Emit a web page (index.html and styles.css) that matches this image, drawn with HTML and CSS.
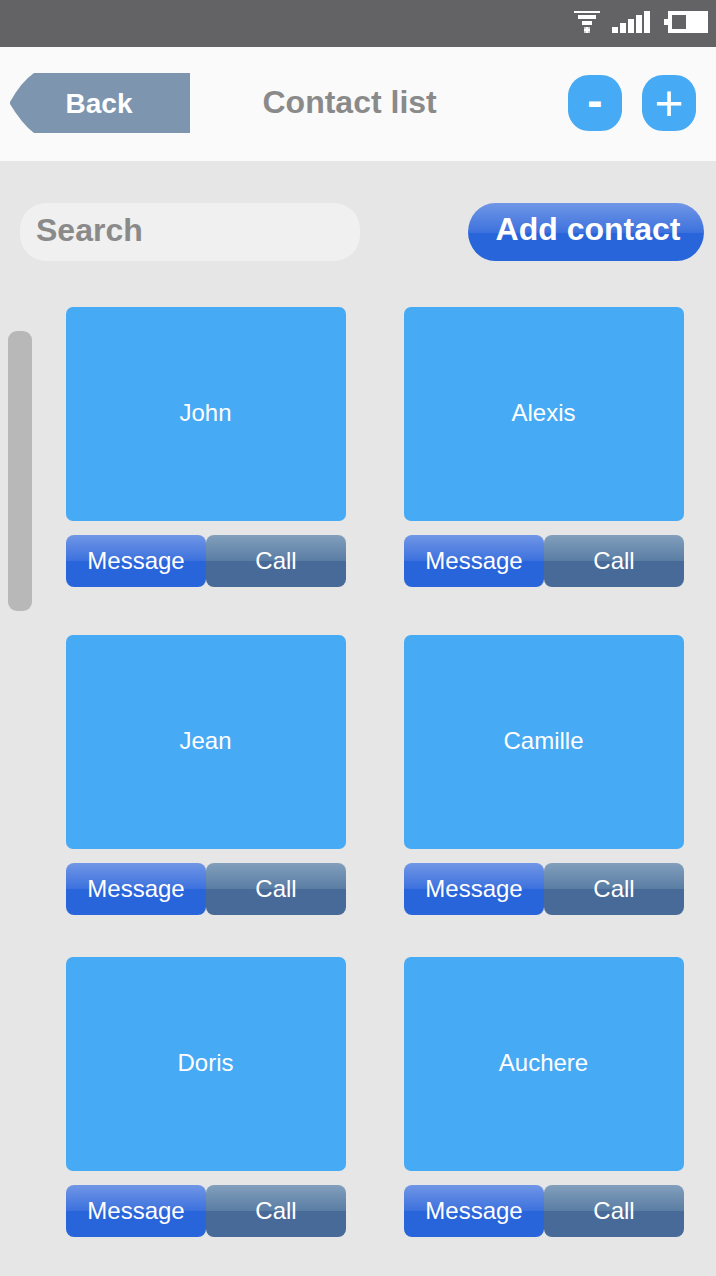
FILE: index.html
```html
<!DOCTYPE html>
<html lang="en">
<head>
<meta charset="utf-8">
<title>Contact list</title>
<link rel="stylesheet" href="styles.css">
</head>
<body>
<div class="status">
  <svg width="134" height="22" viewBox="0 0 134 22" shape-rendering="crispEdges" fill="#fff">
    <path d="M0 0h26v2H0zM4 4h18v4H4zM8 10h10v4H8z"/>
    <path d="M10 16h6v6h-6z" opacity=".7"/><path d="M12 16h2v2h2v2h-2v2h-2v-2h-2v-2h2z"/>
    <path d="M38 16h6v6h-6zM46 12h6v10h-6zM54 8h6v14h-6zM62 4h6v18h-6zM70 0h6v22h-6z"/>
    <path fill-rule="evenodd" d="M94 0h40v22H94v-8h-4V8h4zM98 4v14h14V4z"/>
  </svg>
</div>
<header class="topbar">
  <button class="back">
    <svg class="back-shape" width="180" height="60" viewBox="0 0 180 60"><path fill="#7e95af" d="M180 0v60H24Q12 51 0 31v-2Q11 9 24 0z"/></svg>
    <span class="back-label">Back</span>
  </button>
  <h1 class="title">Contact list</h1>
  <button class="round" aria-label="Remove"><svg width="54" height="56" viewBox="0 0 54 56"><path class="blob" d="M21 0H33C46 0 54 11 54 21V35C54 45 46 56 33 56H21C8 56 0 45 0 35V21C0 11 8 0 21 0z"/></svg><span class="sign minus">-</span></button>
  <button class="round" aria-label="Add"><svg width="54" height="56" viewBox="0 0 54 56"><path class="blob" d="M21 0H33C46 0 54 11 54 21V35C54 45 46 56 33 56H21C8 56 0 45 0 35V21C0 11 8 0 21 0z"/></svg><span class="sign plus">+</span></button>
</header>
<div class="tools">
  <div class="search">Search</div>
  <button class="add">Add contact</button>
</div>
<main class="content">
  <div class="scrollbar"></div>
  <div class="grid">
    <section class="contact"><div class="card">John</div><div class="actions"><button class="btn message">Message</button><button class="btn call">Call</button></div></section>
    <section class="contact"><div class="card">Alexis</div><div class="actions"><button class="btn message">Message</button><button class="btn call">Call</button></div></section>
    <section class="contact"><div class="card">Jean</div><div class="actions"><button class="btn message">Message</button><button class="btn call">Call</button></div></section>
    <section class="contact"><div class="card">Camille</div><div class="actions"><button class="btn message">Message</button><button class="btn call">Call</button></div></section>
    <section class="contact"><div class="card">Doris</div><div class="actions"><button class="btn message">Message</button><button class="btn call">Call</button></div></section>
    <section class="contact"><div class="card">Auchere</div><div class="actions"><button class="btn message">Message</button><button class="btn call">Call</button></div></section>
  </div>
</main>
</body>
</html>
```
FILE: styles.css
```css
* { box-sizing: border-box; }
body {
  margin: 0;
  width: 716px;
  height: 1276px;
  overflow: hidden;
  background: #e6e6e6;
  font-family: "Liberation Sans", Arial, sans-serif;
}
button {
  margin: 0;
  padding: 0;
  border: 0;
  background: none;
  font-family: inherit;
  color: #fff;
}
svg { display: block; }
.status {
  height: 47px;
  background: #636365;
  display: flex;
  justify-content: flex-end;
  padding: 11px 8px 0 0;
}
.topbar {
  height: 114px;
  background: #fafafa;
  display: flex;
  align-items: flex-start;
  padding: 26px 20px 0 10px;
}
.back, .round { display: grid; }
.back > *, .round > * { grid-area: 1 / 1; }
.back { width: 180px; height: 60px; }
.back-label {
  padding-right: 2px;
  line-height: 61px;
  font-size: 28px;
  font-weight: bold;
}
.title {
  margin: 0 auto 0 72.5px;
  font-size: 32px;
  line-height: 58px;
  color: #8a8a8a;
}
.round {
  width: 54px;
  height: 56px;
  margin: 2px 0 0 20px;
}
.blob { fill: #47aaf4; }
.minus { font-size: 46px; font-weight: bold; line-height: 51px; }
.plus { font-size: 50px; line-height: 56px; }
.tools {
  display: flex;
  justify-content: space-between;
  padding: 42px 12px 0 20px;
}
.search {
  width: 340px;
  height: 58px;
  border-radius: 26px;
  background: #f0f0f0;
  padding-left: 16px;
  font-size: 32px;
  font-weight: bold;
  line-height: 54px;
  color: #8a8a8a;
}
.add {
  width: 236px;
  height: 58px;
  border-radius: 27px / 29px;
  background: linear-gradient(#7096e6 0, #3c71dd 30px, #2865db 30px, #2865db 100%);
  padding: 0 0 6px 4px;
  font-size: 32px;
  font-weight: bold;
  line-height: 52px;
}
.content {
  display: flex;
  align-items: flex-start;
  padding: 46px 0 0 8px;
}
.scrollbar {
  width: 24px;
  height: 280px;
  margin: 24px 34px 0 0;
  border-radius: 9px;
  background: #b8b8b8;
}
.grid {
  display: grid;
  grid-template-columns: 280px 280px;
  grid-template-rows: 328px 322px 280px;
  column-gap: 58px;
}
.card {
  height: 214px;
  padding-right: 1px;
  border-radius: 7px;
  background: #47aaf4;
  color: #fff;
  font-size: 24px;
  line-height: 212px;
  text-align: center;
}
.actions {
  display: flex;
  margin-top: 14px;
}
.btn {
  width: 140px;
  height: 52px;
  border-radius: 8px;
  font-size: 24px;
  line-height: 52px;
}
.message { background: linear-gradient(#7096e6 0, #3c71dd 26px, #2865db 26px, #2865db 100%); }
.call { background: linear-gradient(#829fbc 0, #5a7da4 26px, #486a98 26px, #486a98 100%); }
```
